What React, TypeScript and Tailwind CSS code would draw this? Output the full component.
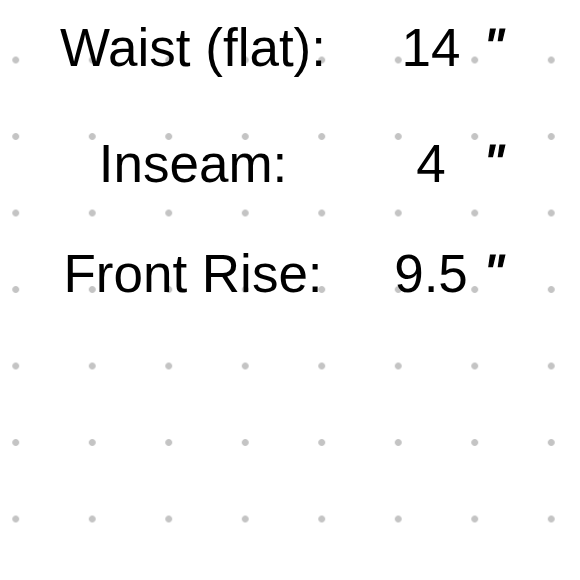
export default function App() {
  const rows = [
    { label: "Waist (flat):", value: "14", gap: "mt-[21px]" },
    { label: "Inseam:", value: "4", gap: "mt-[63px]" },
    { label: "Front Rise:", value: "9.5", gap: "mt-[57px]" },
  ]

  return (
    <div className="w-[580px] h-[580px] overflow-hidden bg-white bg-[radial-gradient(circle,#c4c4c4_0,#c4c4c4_3px,transparent_3.8px)] bg-[length:76.5px_76.5px] bg-[position:-22.5px_21.75px] font-['Liberation_Sans',Arial,sans-serif] text-black">
      <div className="flex flex-col">
        {rows.map((row) => (
          <div key={row.label} className={`grid grid-cols-[386px_90px_1fr] text-[53px] leading-none ${row.gap}`}>
            <span className="text-center">{row.label}</span>
            <span className="text-center">{row.value}</span>
            <span className="pl-[8px] italic [-webkit-text-stroke:1.2px_black]">"</span>
          </div>
        ))}
      </div>
    </div>
  )
}
